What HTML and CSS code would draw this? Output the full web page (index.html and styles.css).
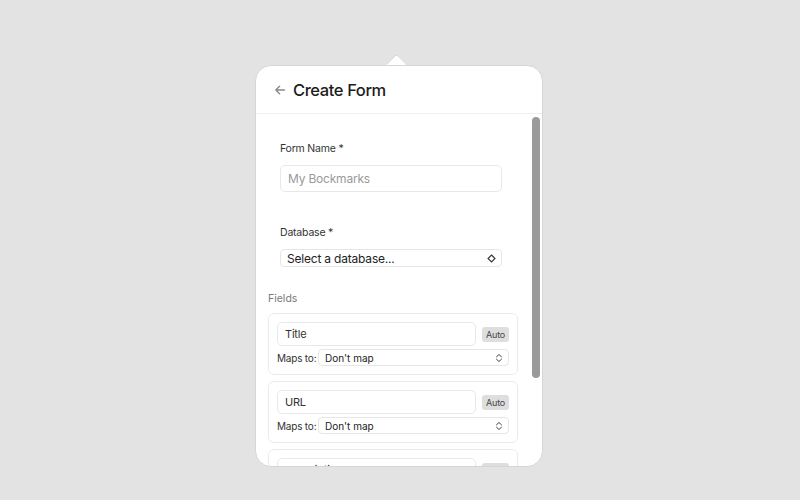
FILE: index.html
```html
<!DOCTYPE html>
<html lang="en-us">
	<head>
		<link rel="stylesheet" href="styles.css">
	</head>
	<body>
		<div class="popover">
			<div class="tip"></div>
			<div class="panel">
				<header class="head">
					<svg class="back" width="12" height="12" viewBox="0 0 12 12"><path d="M10.5 6H1.8M5.6 2.2 1.8 6l3.8 3.8" fill="none" stroke="#8a8a8a" stroke-width="1.4" stroke-linecap="round" stroke-linejoin="round"/></svg>
					<h1>Create Form</h1>
				</header>
				<div class="body">
					<section class="basics">
						<div class="group">
							<label class="lbl">Form Name *</label>
							<div class="input ph">My Bockmarks</div>
						</div>
						<div class="group">
							<label class="lbl">Database *</label>
							<div class="select main">Select a database...
								<svg width="9" height="9" viewBox="0 0 9 9"><path d="M4.5 1 8 4.5 4.5 8 1 4.5Z" fill="none" stroke="#333" stroke-width="1.1"/></svg>
							</div>
						</div>
					</section>
					<div class="fields-title">Fields</div>
					<div class="card">
						<div class="row"><div class="input small">Title</div><span class="badge">Auto</span></div>
						<div class="row"><span class="maps">Maps to:</span><div class="select map">Don't map
							<svg width="8" height="10" viewBox="0 0 8 10"><path d="M1.5 3.8 4 1.5l2.5 2.3M1.5 6.2 4 8.5l2.5-2.3" fill="none" stroke="#444" stroke-width="1" stroke-linecap="round"/></svg></div></div>
					</div>
					<div class="card">
						<div class="row"><div class="input small">URL</div><span class="badge">Auto</span></div>
						<div class="row"><span class="maps">Maps to:</span><div class="select map">Don't map
							<svg width="8" height="10" viewBox="0 0 8 10"><path d="M1.5 3.8 4 1.5l2.5 2.3M1.5 6.2 4 8.5l2.5-2.3" fill="none" stroke="#444" stroke-width="1" stroke-linecap="round"/></svg></div></div>
					</div>
					<div class="card">
						<div class="row"><div class="input small">Description</div><span class="badge">Auto</span></div>
					</div>
					<div class="scrollbar"></div>
				</div>
			</div>
		</div>
	</body>
</html>
```

FILE: styles.css
```css
body { margin: 0; background: #e3e3e3; font-family: Inter, "Noto Sans", sans-serif; color: #222; }

.popover { position: relative; width: 288px; margin: 65px 0 0 255px; }
.tip {
	position: absolute;
	left: 133px;
	top: -9px;
	width: 20px;
	height: 20px;
	background: #fff;
	border-top: 1px solid #d6d6d6;
	border-left: 1px solid #d6d6d6;
	transform: rotate(45deg) scaleY(0.7);
	transform-origin: center;
	border-radius: 3px 0 0 0;
}
.panel {
	position: relative;
	height: 400px;
	background: #fff;
	border: 1px solid #d6d6d6;
	border-radius: 16px;
	overflow: hidden;
}
.head { display: flex; align-items: center; gap: 7px; height: 47px; padding: 0 18px; border-bottom: 1px solid #efefef; }
.head h1 { margin: 0; font-size: 16.5px; font-weight: 500; color: #1c1c1c; letter-spacing: -0.4px; }
.back { margin-top: 1px; }

.body { position: relative; padding: 0 24px 0 12px; }
.basics { padding: 28px 16px 0 12px; }
.group { display: flex; flex-direction: column; }
.group + .group { margin-top: 34px; }
.lbl { font-size: 10.5px; color: #333; line-height: 14px; margin-bottom: 9px; letter-spacing: -0.2px; }
.input {
	border: 1px solid #e8e8e8;
	border-radius: 5px;
	height: 25px;
	padding: 0 7px;
	display: flex;
	align-items: center;
	font-size: 12px;
	letter-spacing: -0.2px;
}
.ph { color: #9a9a9a; }
.select {
	display: flex;
	align-items: center;
	justify-content: space-between;
	border: 1px solid #e6e6e6;
	border-radius: 4px;
	padding: 0 5px 0 6px;
	color: #222;
}
.select.main { height: 16px; font-size: 12px; letter-spacing: -0.2px; }

.fields-title { font-size: 10.5px; color: #7a7a7a; margin: 25px 0 7px; line-height: 14px; }
.card {
	border: 1px solid #ebebeb;
	border-radius: 6px;
	padding: 8px;
	margin-bottom: 6px;
}
.row { display: flex; align-items: center; gap: 6px; }
.row + .row { margin-top: 3px; }
.input.small { flex: 1; height: 22px; font-size: 11px; color: #333; padding: 0 7px; }
.badge { background: #dedede; color: #444; font-size: 9px; border-radius: 3px; padding: 2px 4px; line-height: 11px; letter-spacing: -0.2px; }
.maps { font-size: 10px; color: #333; white-space: nowrap; flex-shrink: 0; width: 35px; letter-spacing: -0.2px; }
.select.map { flex: 1; height: 15px; font-size: 10px; }

.scrollbar {
	position: absolute;
	right: 2px;
	top: 3px;
	width: 8px;
	height: 261px;
	background: #9a9a9a;
	border-radius: 4px;
}
```
